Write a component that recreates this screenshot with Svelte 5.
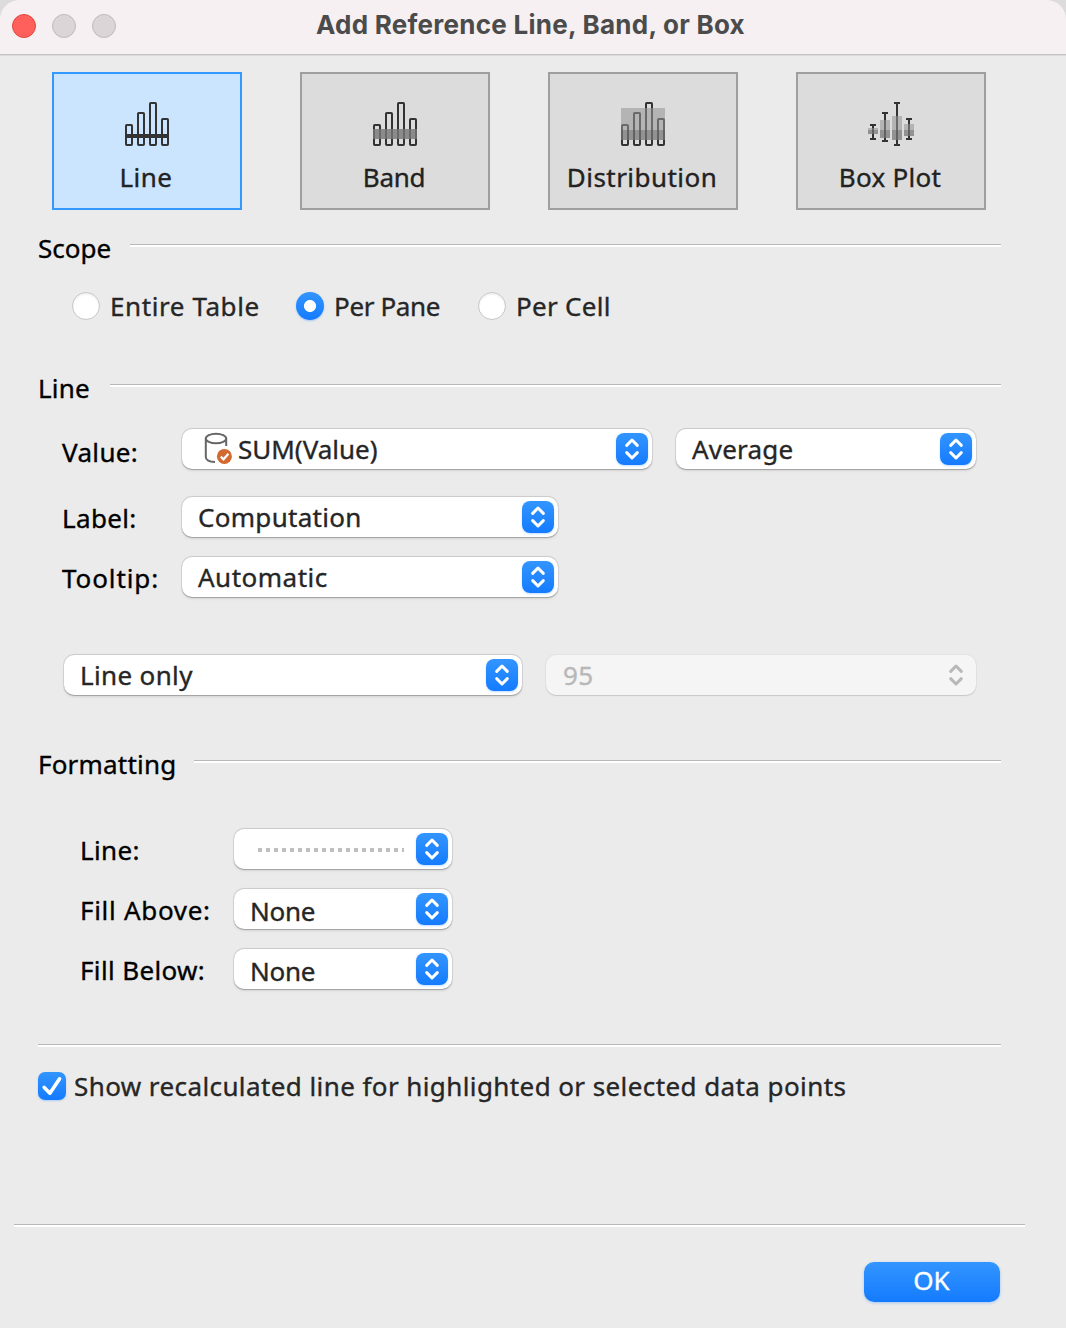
<script>
  const bars = [
    { x: 0, y: 22 },
    { x: 12, y: 10 },
    { x: 24, y: 0 },
    { x: 36, y: 16 }
  ];
  const boxes = [
    { x: 0, top: 26, bottom: 32, low: 38, high: 22 },
    { x: 12, top: 18, bottom: 36, low: 40, high: 10 },
    { x: 24, top: 14, bottom: 38, low: 44, high: 0 },
    { x: 36, top: 22, bottom: 34, low: 38, high: 16 }
  ];
  const kinds = [
    { id: 'line', label: 'Line' },
    { id: 'band', label: 'Band' },
    { id: 'distribution', label: 'Distribution' },
    { id: 'boxplot', label: 'Box Plot' }
  ];
  const scopes = [
    { id: 'table', label: 'Entire Table' },
    { id: 'pane', label: 'Per Pane' },
    { id: 'cell', label: 'Per Cell' }
  ];
  let kind = $state('line');
  let scope = $state('pane');
  let recalc = $state(true);
</script>

{#snippet stepper()}
  <svg class="stepper" viewBox="0 0 32 32" aria-hidden="true">
    <path d="M10.700 12.400 16 7l5.300 5.400M10.700 19.600 16 25l5.300-5.400" />
  </svg>
{/snippet}

<div class="window">
  <header class="titlebar">
    <div class="lights"><i class="close"></i><i></i><i></i></div>
    <h1>Add Reference Line, Band, or Box</h1>
  </header>

  <main>
    <div class="cards">
      {#each kinds as k}
        <button class="card {k.id}" class:active={kind === k.id} onclick={() => (kind = k.id)}>
          {#if k.id === 'boxplot'}
            <svg width="46" height="44" viewBox="0 0 46 44">
              {#each boxes as b}
                <path class="stroke" d="M{b.x + 5} {b.high}V{b.low}M{b.x + 2} {b.high + 1}h6M{b.x + 2} {b.low - 1}h6" />
                <rect class="haze" x={b.x} y={b.top} width="10" height={b.bottom - b.top} />
                <rect class="core" x={b.x} y="28" width="10" height={b.bottom - 28} />
              {/each}
            </svg>
          {:else}
            <svg width="44" height="44" viewBox="0 0 44 44">
              {#each bars as b}
                <rect class="stroke" x={b.x + 1} y={b.y + 1} width="6" height={42 - b.y} rx="0.8" />
              {/each}
              {#if k.id === 'line'}
                <rect class="solid" y="32" width="44" height="4" />
              {:else if k.id === 'band'}
                <rect class="bandfill" y="27" width="44" height="10" />
              {:else}
                <rect class="haze" y="6" width="44" height="32" />
                <rect class="core" y="28" width="44" height="10" />
              {/if}
            </svg>
          {/if}
          <span>{k.label}</span>
        </button>
      {/each}
    </div>

    <div class="heading scope-heading"><h2>Scope</h2><hr /></div>
    <div class="scopes">
      {#each scopes as s}
        <label class={s.id}>
          <input type="radio" name="scope" value={s.id} bind:group={scope} />
          <span>{s.label}</span>
        </label>
      {/each}
    </div>

    <div class="heading line-heading"><h2>Line</h2><hr /></div>
    <div class="fields">
      <div class="row value-row">
        <span class="name value-name">Value:</span>
        <div class="popup w-value">
          <svg class="db" width="28" height="32" viewBox="0 0 28 32">
            <ellipse cx="12" cy="6.500" rx="10.200" ry="4.800" />
            <path d="M1.800 6.500v18.500c0 3 4 4.800 9.200 5M22.200 6.500v7.500" />
            <circle cx="20.400" cy="24.400" r="7.500" />
            <path class="tick" d="m16.800 24.600 2.700 2.700 4.900-5.600" />
          </svg>
          <span class="sum">SUM(Value)</span>{@render stepper()}
        </div>
        <div class="popup w-average"><span class="average">Average</span>{@render stepper()}</div>
      </div>
      <div class="row">
        <span class="name">Label:</span>
        <div class="popup w-medium"><span class="computation">Computation</span>{@render stepper()}</div>
      </div>
      <div class="row">
        <span class="name tooltip-name">Tooltip:</span>
        <div class="popup w-medium"><span>Automatic</span>{@render stepper()}</div>
      </div>
    </div>
    <div class="interval">
      <div class="popup w-only"><span>Line only</span>{@render stepper()}</div>
      <div class="popup disabled w-percent"><span class="percent">95</span>{@render stepper()}</div>
    </div>

    <div class="heading format-heading"><h2>Formatting</h2><hr /></div>
    <div class="formats">
      <div class="row">
        <span class="name">Line:</span>
        <div class="popup w-small"><div class="dots"></div>{@render stepper()}</div>
      </div>
      <div class="row">
        <span class="name above">Fill Above:</span>
        <div class="popup w-small"><span class="none">None</span>{@render stepper()}</div>
      </div>
      <div class="row">
        <span class="name below">Fill Below:</span>
        <div class="popup w-small"><span class="none">None</span>{@render stepper()}</div>
      </div>
    </div>

    <hr class="divider" />
    <label class="recalc">
      <input type="checkbox" bind:checked={recalc} />
      <svg class="check" viewBox="0 0 28 28" aria-hidden="true"><path d="m6.200 15.400 5.700 5.800L21.600 6.800" /></svg>
      <span>Show recalculated line for highlighted or selected data points</span>
    </label>
  </main>

  <footer>
    <hr />
    <button class="ok">OK</button>
  </footer>
</div>

<style>
  :global(body) {
    background: #dcdcdc;
  }
  * {
    box-sizing: border-box;
  }
  .window {
    width: 1066px;
    height: 1328px;
    display: flex;
    flex-direction: column;
    overflow: hidden;
    background: #ebebeb;
    border-radius: 20px 20px 0 0;
    font: 26px/36px 'Noto Sans', 'Open Sans', sans-serif;
    letter-spacing: 0.5px;
    -webkit-text-stroke: 0.35px;
    color: #262626;
    white-space: nowrap;
  }
  .titlebar {
    height: 56px;
    flex: none;
    display: grid;
    grid-template-columns: 316px 1fr;
    align-items: start;
    background: #f6f0f2;
    border-bottom: 1px solid #dcdadb;
    box-shadow: inset 0 -1px #c3c1c2;
  }
  .lights {
    display: flex;
    gap: 16px;
    padding: 14px 0 0 12px;
  }
  .lights i {
    width: 24px;
    height: 24px;
    border-radius: 50%;
    background: #dbd5d7;
    border: 1px solid #bfbabc;
  }
  .lights .close {
    background: #ff605c;
    border-color: #e2463f;
  }
  h1 {
    margin: 7px 0 0;
    font: 700 26px/36px Inter, sans-serif;
    letter-spacing: 0.26px;
    -webkit-text-stroke: 0;
    color: #4b4b4b;
  }
  main {
    flex: none;
    height: 1168px;
    padding: 16px 0 0 38px;
  }
  button {
    font: inherit;
    letter-spacing: inherit;
    color: inherit;
    padding: 0;
    border: 0;
  }
  .cards {
    display: flex;
    gap: 58px;
    padding-left: 14px;
  }
  .card {
    width: 190px;
    height: 138px;
    padding: 28px 2px 0 0;
    display: flex;
    flex-direction: column;
    align-items: center;
    gap: 13px;
    background: #dcdcdc;
    border: 2px solid #9f9f9f;
    color: #222;
  }
  .card svg {
    margin-left: 2px;
    flex: none;
  }
  .card.active {
    background: #cbe5ff;
    border-color: #3399ff;
  }
  .card.band {
    letter-spacing: -0.3px;
  }
  .card.distribution {
    letter-spacing: 0.45px;
  }
  .card.boxplot {
    letter-spacing: 0.3px;
  }
  .stroke {
    fill: none;
    stroke: #333;
    stroke-width: 2;
  }
  .solid {
    fill: #333;
  }
  .bandfill {
    fill: #777;
    opacity: 0.8;
  }
  .haze {
    fill: #949494;
    opacity: 0.565;
  }
  .core {
    fill: #535353;
    opacity: 0.35;
  }
  hr {
    margin: 0;
    border: 0;
    height: 3px;
    background: linear-gradient(#b9b9b9 1px, #fff 1px);
  }
  .heading {
    display: flex;
    align-items: flex-start;
    width: 963px;
    height: 36px;
    color: #000;
    letter-spacing: 0.2px;
  }
  .heading hr {
    flex: 1;
    margin-top: 14px;
  }
  .heading h2 {
    margin: 0;
    font: inherit;
  }
  .scope-heading {
    margin-top: 20px;
    letter-spacing: 0;
  }
  .scope-heading h2 {
    width: 92px;
  }
  .scopes {
    display: flex;
    height: 36px;
    margin-top: 22px;
    padding-left: 34px;
  }
  label {
    display: flex;
    align-items: center;
  }
  .scopes label {
    gap: 10px;
  }
  .table {
    width: 224px;
    letter-spacing: 0.6px;
  }
  .pane {
    width: 182px;
    letter-spacing: -0.35px;
  }
  .cell {
    letter-spacing: 0.3px;
  }
  input {
    appearance: none;
    flex: none;
    width: 28px;
    height: 28px;
    margin: 0;
  }
  input[type='radio'] {
    border-radius: 50%;
    background: #fff;
    border: 1px solid #c6c6c6;
    box-shadow: inset 0 2px 2px #0000000d;
  }
  input[type='radio']:checked {
    border: 0;
    background: radial-gradient(circle, #fff 5.600px, #fff0 6.400px), linear-gradient(#3395ff, #147bff);
    box-shadow: 0 1px 2px #147bff55;
  }
  .line-heading {
    margin-top: 46px;
  }
  .line-heading h2 {
    width: 72px;
  }
  .fields {
    display: flex;
    flex-direction: column;
    gap: 20px;
    margin-top: 23px;
    padding-left: 24px;
  }
  .row {
    display: flex;
    height: 40px;
  }
  .value-row {
    margin-bottom: 8px;
  }
  .name {
    width: 120px;
    padding-top: 3px;
    flex: none;
    color: #000;
    letter-spacing: 0.35px;
  }
  .value-name {
    padding-top: 5px;
  }
  .tooltip-name {
    letter-spacing: 0.9px;
  }
  .popup {
    display: flex;
    align-items: center;
    justify-content: space-between;
    height: 40px;
    padding: 0 4px 0 16px;
    border-radius: 10px;
    background: #fff;
    box-shadow:
      0 0 0 1px #0000000d,
      0 -0.5px 1px #00000018,
      0 1px 1px #00000038,
      0 2px 3px #00000014;
  }
  .stepper {
    width: 32px;
    height: 32px;
    flex: none;
    border-radius: 8px;
    background: linear-gradient(#3395ff, #147bff);
    box-shadow: 0 1px 2px #147bff44;
  }
  .stepper path {
    fill: none;
    stroke: #fff;
    stroke-width: 3;
    stroke-linecap: round;
    stroke-linejoin: round;
  }
  .w-value {
    width: 470px;
    margin-right: 24px;
    padding-left: 22px;
  }
  .sum {
    flex: 1;
    padding-left: 6px;
    letter-spacing: 0;
  }
  .w-average {
    width: 300px;
  }
  .average {
    letter-spacing: 0.2px;
  }
  .w-medium {
    width: 376px;
  }
  .computation {
    letter-spacing: 0.3px;
  }
  .db {
    flex: none;
    margin-bottom: 2px;
    fill: none;
    stroke: #666;
    stroke-width: 2;
  }
  .db circle {
    fill: #d2692f;
    stroke: none;
  }
  .db .tick {
    stroke: #fff;
    stroke-width: 2.2;
  }
  .interval {
    display: flex;
    gap: 24px;
    margin-top: 58px;
    padding-left: 26px;
  }
  .w-only {
    width: 458px;
    letter-spacing: 0.35px;
  }
  .w-percent {
    width: 430px;
  }
  .percent {
    padding-left: 1px;
  }
  .disabled {
    background: #f5f5f5;
    color: #b8b8b8;
    box-shadow:
      0 0 0 1px #00000008,
      0 1px 1px #00000020;
  }
  .disabled .stepper {
    background: none;
    box-shadow: none;
  }
  .disabled .stepper path {
    stroke: #b8b8b8;
  }
  .format-heading {
    margin-top: 51px;
  }
  .format-heading h2 {
    width: 156px;
  }
  .formats {
    display: flex;
    flex-direction: column;
    gap: 20px;
    margin-top: 47px;
    padding-left: 42px;
  }
  .formats .name {
    width: 154px;
  }
  .formats .above {
    letter-spacing: 0.7px;
  }
  .w-small {
    width: 218px;
  }
  .none {
    padding-top: 4px;
    letter-spacing: -0.3px;
  }
  .dots {
    width: 146px;
    height: 4px;
    margin: 2px 0 0 8px;
    background: repeating-linear-gradient(90deg, #bfbfbf 0 4px, #fff0 4px 8px);
  }
  .divider {
    width: 963px;
    margin-top: 55px;
  }
  .recalc {
    height: 36px;
    margin-top: 21px;
    letter-spacing: 0.41px;
  }
  input[type='checkbox'] {
    border-radius: 7px;
    background: #fff;
  }
  input[type='checkbox']:checked {
    background: linear-gradient(#3395ff, #147bff);
    box-shadow: 0 1px 2px #147bff44;
  }
  .check {
    width: 28px;
    height: 28px;
    margin: 0 8px 0 -28px;
    fill: none;
    stroke: #fff;
    stroke-width: 3.600;
    stroke-linecap: round;
    stroke-linejoin: round;
  }
  footer {
    flex: none;
    padding: 0 41px 0 14px;
  }
  .ok {
    display: block;
    width: 136px;
    height: 40px;
    margin: 35px 25px 0 auto;
    padding: 0 1px 4px 0;
    border-radius: 10px;
    background: linear-gradient(#3395ff, #147bff);
    box-shadow: 0 1px 3px #147bff55;
    color: #fff;
    letter-spacing: 0;
  }
</style>
